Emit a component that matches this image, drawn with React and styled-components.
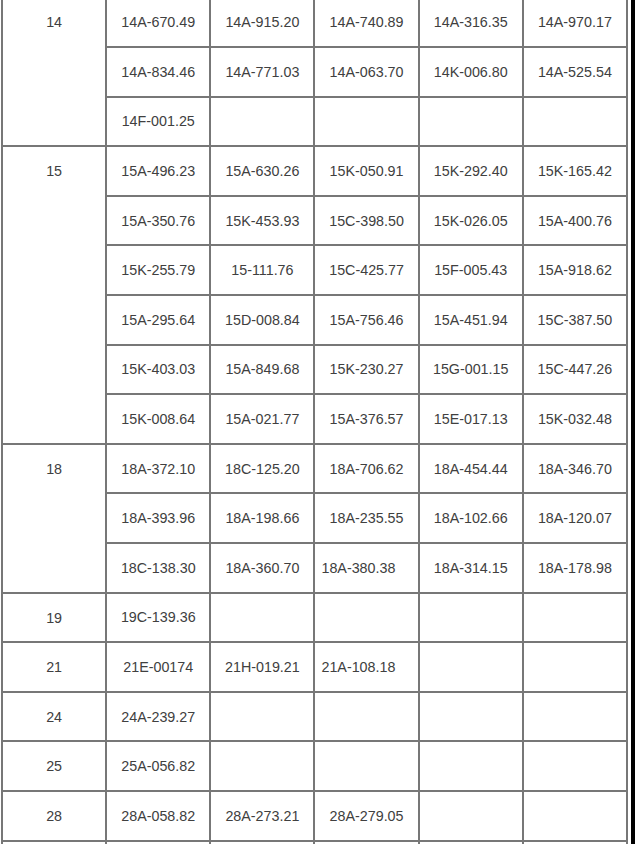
import React from "react";
import styled, { createGlobalStyle } from "styled-components";

const GlobalStyle = createGlobalStyle`
  html, body {
    margin: 0;
    padding: 0;
    background: #fff;
  }
  body {
    font-family: "Liberation Sans", Arial, sans-serif;
    overflow: hidden;
  }
`;

// each group: label + rows of 5 codes ("<" prefix = left aligned cell)
const groups = [
  {
    label: "14",
    rows: [
      ["14A-670.49", "14A-915.20", "14A-740.89", "14A-316.35", "14A-970.17"],
      ["14A-834.46", "14A-771.03", "14A-063.70", "14K-006.80", "14A-525.54"],
      ["14F-001.25", "", "", "", ""],
    ],
  },
  {
    label: "15",
    rows: [
      ["15A-496.23", "15A-630.26", "15K-050.91", "15K-292.40", "15K-165.42"],
      ["15A-350.76", "15K-453.93", "15C-398.50", "15K-026.05", "15A-400.76"],
      ["15K-255.79", "15-111.76", "15C-425.77", "15F-005.43", "15A-918.62"],
      ["15A-295.64", "15D-008.84", "15A-756.46", "15A-451.94", "15C-387.50"],
      ["15K-403.03", "15A-849.68", "15K-230.27", "15G-001.15", "15C-447.26"],
      ["15K-008.64", "15A-021.77", "15A-376.57", "15E-017.13", "15K-032.48"],
    ],
  },
  {
    label: "18",
    rows: [
      ["18A-372.10", "18C-125.20", "18A-706.62", "18A-454.44", "18A-346.70"],
      ["18A-393.96", "18A-198.66", "18A-235.55", "18A-102.66", "18A-120.07"],
      ["18C-138.30", "18A-360.70", "<18A-380.38", "18A-314.15", "18A-178.98"],
    ],
  },
  { label: "19", rows: [["19C-139.36", "", "", "", ""]] },
  { label: "21", rows: [["21E-00174", "21H-019.21", "<21A-108.18", "", ""]] },
  { label: "24", rows: [["24A-239.27", "", "", "", ""]] },
  { label: "25", rows: [["25A-056.82", "", "", "", ""]] },
  { label: "28", rows: [["28A-058.82", "28A-273.21", "28A-279.05", "", ""]] },
  { label: "", rows: [["", "", "", "", ""]] },
];

const App = () => {
  return (
    <Page>
      <GlobalStyle />
      <Table>
        <colgroup>
          {[0, 1, 2, 3, 4, 5].map((i) => (
            <col key={i} />
          ))}
        </colgroup>
        <tbody>
          {groups.map((group, gi) =>
            group.rows.map((row, ri) => (
              <Row key={gi + "-" + ri}>
                {ri === 0 && (
                  <LabelCell rowSpan={group.rows.length}>{group.label}</LabelCell>
                )}
                {row.map((code, ci) => {
                  const left = code.startsWith("<");
                  return (
                    <Cell key={ci} $left={left}>
                      {left ? code.slice(1) : code}
                    </Cell>
                  );
                })}
              </Row>
            ))
          )}
        </tbody>
      </Table>
    </Page>
  );
};

const Page = styled.div`
  width: 635px;
  height: 844px;
  box-sizing: border-box;
  padding-left: 1px;
  border-right: 4px solid #000;
  overflow: hidden;
`;

const Table = styled.table`
  width: 627px;
  margin-top: -3.6px;
  border-collapse: collapse;
  table-layout: fixed;
  color: #404040;
  font-size: 14.3px;
`;

const Row = styled.tr`
  height: 49.6px;
`;

const Cell = styled.td`
  border: 2px solid #777;
  padding: ${(p) => (p.$left ? "0 0 0 6px" : "0")};
  text-align: ${(p) => (p.$left ? "left" : "center")};
  vertical-align: middle;
  white-space: nowrap;
`;

const LabelCell = styled.td`
  border: 2px solid #777;
  padding: 16px 0 0;
  text-align: center;
  vertical-align: top;
`;

export default App;
